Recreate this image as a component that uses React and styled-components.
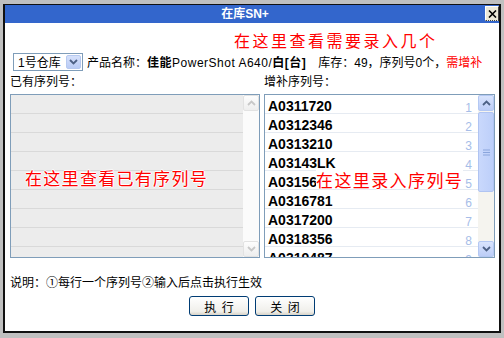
import styled, { createGlobalStyle } from "styled-components";

const GlobalStyle = createGlobalStyle`
  html, body {
    margin: 0;
    padding: 0;
  }
  body {
    background: #c0c0c0;
    font-family: "Liberation Sans", "Noto Sans CJK SC", sans-serif;
    font-size: 12px;
    color: #000;
  }
`;

const Page = styled.div`
  width: 504px;
  height: 338px;
  box-sizing: border-box;
  padding: 4px 0 0 3px;
  background: #c0c0c0;
  overflow: hidden;
`;

const Dialog = styled.div`
  width: 498px;
  box-sizing: border-box;
  border: 2px solid #111;
  border-top-width: 1px;
  background: #fff;
`;

const TitleBar = styled.div`
  position: relative;
  height: 18px;
  padding-right: 14px;
  background: #3366cc;
  color: #fff;
  font-weight: bold;
  font-size: 12px;
  line-height: 18px;
  text-align: center;
`;

const CloseButton = styled.div`
  position: absolute;
  right: 0;
  top: 1px;
  width: 14px;
  height: 15px;
  box-sizing: border-box;
  display: flex;
  align-items: center;
  justify-content: center;
  background: #ece9d8;
  border: 1px solid;
  border-color: #fff #404040 #404040 #fff;
  border-bottom-style: dotted;
`;

const Body = styled.div`
  position: relative;
  height: 308px;
  box-sizing: border-box;
  padding: 29px 0 0 5px;
`;

const Annotation = styled.div`
  position: absolute;
  left: ${(p) => p.$x}px;
  top: ${(p) => p.$y}px;
  color: #f00;
  font-family: "Noto Sans CJK SC", sans-serif;
  font-size: ${(p) => p.$size}px;
  line-height: ${(p) => p.$size + 2}px;
  letter-spacing: ${(p) => p.$spacing}px;
  white-space: nowrap;
  background: ${(p) => (p.$cover ? "#fff" : "transparent")};
  text-shadow: 1px 0 0 #fff, -1px 0 0 #fff, 0 1px 0 #fff, 0 -1px 0 #fff;
`;

const InfoRow = styled.div`
  display: flex;
  align-items: center;
  height: 19px;
  white-space: nowrap;
`;

const Select = styled.div`
  display: flex;
  align-items: center;
  justify-content: space-between;
  width: 70px;
  height: 18px;
  box-sizing: border-box;
  margin: 0 4px 0 3px;
  padding: 0 1px 0 4px;
  border: 1px solid #7f9db9;
  background: #fff;
`;

const DropButton = styled.div`
  width: 15px;
  height: 14px;
  box-sizing: border-box;
  display: flex;
  align-items: center;
  justify-content: center;
  border: 1px solid #b6c9f0;
  border-radius: 2px;
  background: linear-gradient(#d6e1fb, #b9cbf5);
`;

const ProductName = styled.span`
  letter-spacing: 0.5px;
`;

const Strong = styled.b`
  font-weight: bold;
`;

const Stock = styled.span`
  margin-left: 12px;
`;

const Red = styled.span`
  color: #f00;
`;

const Columns = styled.div`
  display: grid;
  grid-template-columns: 250px 231px;
  column-gap: 4px;
`;

const Label = styled.div`
  height: 23px;
  line-height: 23px;
`;

const ListBox = styled.div`
  display: flex;
  height: 164px;
  box-sizing: border-box;
  border: 1px solid #7f9db9;
  background: ${(p) => (p.$disabled ? "#ececec" : "#fff")};
  overflow: hidden;
`;

const Lines = styled.div`
  flex: 1;
  overflow: hidden;
`;

const Line = styled.div`
  display: flex;
  justify-content: space-between;
  height: 19px;
  box-sizing: border-box;
  padding: 5px 6px 0 3px;
  border-bottom: 1px solid ${(p) => (p.$disabled ? "#d9d9d9" : "#e6ebf2")};
  line-height: 13px;
`;

const Serial = styled.span`
  font-family: "Liberation Sans", Arial, sans-serif;
  font-size: 14px;
  font-weight: bold;
`;

const LineNo = styled.span`
  font-family: "Liberation Sans", Arial, sans-serif;
  font-size: 12px;
  color: #a6bde8;
  padding-top: 2px;
`;

const ScrollBar = styled.div`
  display: flex;
  flex-direction: column;
  width: 16px;
  background: ${(p) => (p.$disabled ? "#fbfbfb" : "#f5f4ef")};
`;

const ScrollButton = styled.div`
  height: 16px;
  box-sizing: border-box;
  display: flex;
  align-items: center;
  justify-content: center;
  border: 1px solid ${(p) => (p.$disabled ? "#e2e2e2" : "#b4c8f3")};
  border-radius: 2px;
  background: ${(p) =>
    p.$disabled
      ? "linear-gradient(#fdfdfd, #eeeeee)"
      : "linear-gradient(#d9e4fd, #bccdf7)"};
`;

const Track = styled.div`
  flex: 1;
  padding-top: 1px;
`;

const Thumb = styled.div`
  height: 80px;
  box-sizing: border-box;
  display: flex;
  align-items: center;
  justify-content: center;
  border: 1px solid #b0c4f2;
  border-radius: 2px;
  background: linear-gradient(90deg, #c9d8fc, #bdcff9);
`;

const Hint = styled.div`
  margin-top: 16px;
  line-height: 18px;
`;

const Buttons = styled.div`
  display: flex;
  justify-content: center;
  gap: 6px;
  margin-top: 4px;
  padding-right: 5px;
`;

const Button = styled.button`
  width: 60px;
  height: 20px;
  padding: 0;
  border: 1px solid #003c74;
  border-radius: 3px;
  background: linear-gradient(#ffffff, #f0efea 80%, #d8d3c8);
  font-family: "Liberation Sans", "Noto Sans CJK SC", sans-serif;
  font-size: 12px;
  color: #000;
  word-spacing: 2px;
`;

const Chevron = ({ up, color }) => (
  <svg width="9" height="6" viewBox="0 0 9 6">
    <path
      d={up ? "M1 5 L4.5 1.5 L8 5" : "M1 1 L4.5 4.5 L8 1"}
      fill="none"
      stroke={color}
      strokeWidth="1.8"
    />
  </svg>
);

const existingRows = 9;
const serials = [
  "A0311720",
  "A0312346",
  "A0313210",
  "A03143LK",
  "A0315690",
  "A0316781",
  "A0317200",
  "A0318356",
  "A0319487",
];

const App = () => {
  return (
    <Page>
      <GlobalStyle />
      <Dialog>
        <TitleBar>
          在库SN+
          <CloseButton>
            <svg width="9" height="8" viewBox="0 0 9 8">
              <path d="M1 0.5 L8 7.5 M8 0.5 L1 7.5" stroke="#000" strokeWidth="1.6" />
            </svg>
          </CloseButton>
        </TitleBar>
        <Body>
          <InfoRow>
            <Select>
              1号仓库
              <DropButton>
                <Chevron color="#4d6185" />
              </DropButton>
            </Select>
            产品名称：
            <ProductName>
              <Strong>佳能</Strong>PowerShot A640/<Strong>白[台]</Strong>
            </ProductName>
            <Stock>
              库存：49，序列号0个，<Red>需增补</Red>
            </Stock>
          </InfoRow>
          <Columns>
            <div>
              <Label>已有序列号：</Label>
              <ListBox $disabled>
                <Lines>
                  {Array.from({ length: existingRows }, (_, i) => (
                    <Line key={i} $disabled />
                  ))}
                </Lines>
                <ScrollBar $disabled>
                  <ScrollButton $disabled>
                    <Chevron up color="#c8c8c8" />
                  </ScrollButton>
                  <Track />
                  <ScrollButton $disabled>
                    <Chevron color="#c8c8c8" />
                  </ScrollButton>
                </ScrollBar>
              </ListBox>
            </div>
            <div>
              <Label>增补序列号：</Label>
              <ListBox>
                <Lines>
                  {serials.map((s, i) => (
                    <Line key={s}>
                      <Serial>{s}</Serial>
                      <LineNo>{i + 1}</LineNo>
                    </Line>
                  ))}
                </Lines>
                <ScrollBar>
                  <ScrollButton>
                    <Chevron up color="#4d6185" />
                  </ScrollButton>
                  <Track>
                    <Thumb>
                      <svg width="7" height="7" viewBox="0 0 7 7">
                        <path d="M0 1 H7 M0 3.5 H7 M0 6 H7" stroke="#8aa5dc" strokeWidth="1" />
                      </svg>
                    </Thumb>
                  </Track>
                  <ScrollButton>
                    <Chevron color="#4d6185" />
                  </ScrollButton>
                </ScrollBar>
              </ListBox>
            </div>
          </Columns>
          <Hint>说明：①每行一个序列号②输入后点击执行生效</Hint>
          <Buttons>
            <Button>执 行</Button>
            <Button>关 闭</Button>
          </Buttons>
          <Annotation $x={229} $y={8} $size={16} $spacing={2.5}>
            在这里查看需要录入几个
          </Annotation>
          <Annotation $x={20} $y={145} $size={17} $spacing={1.3}>
            在这里查看已有序列号
          </Annotation>
          <Annotation $x={311} $y={147} $size={17} $spacing={1.4} $cover>
            在这里录入序列号
          </Annotation>
        </Body>
      </Dialog>
    </Page>
  );
};

export default App;
